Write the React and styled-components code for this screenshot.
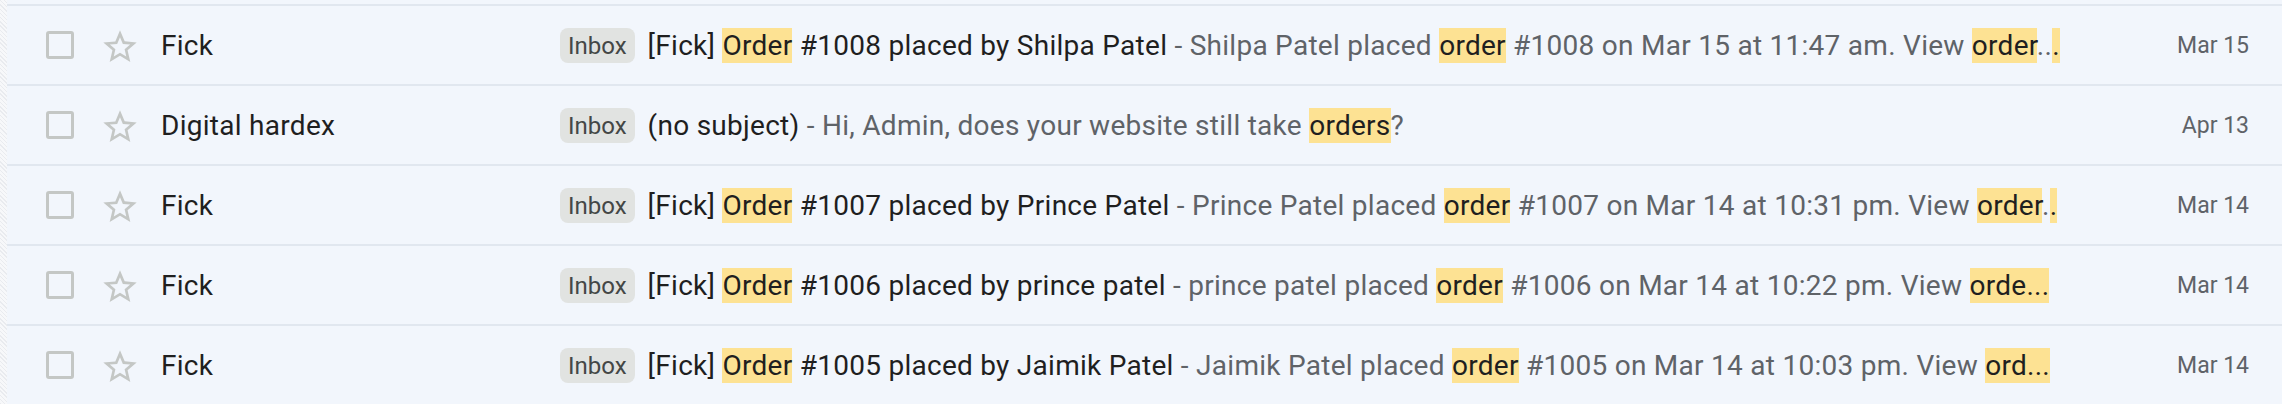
import React from "react";
import styled, { createGlobalStyle } from "styled-components";

const Global = createGlobalStyle`
  html, body { margin: 0; padding: 0; background: #ffffff; }
  body { font-family: Roboto, "Noto Sans", Arial, sans-serif; -webkit-font-smoothing: antialiased; }
`;

const Page = styled.div`
  display: flex;
  width: 2294px;
  height: 404px;
  overflow: hidden;
  background: #ffffff;
`;

const Gutter = styled.div`
  flex: 0 0 7px;
  background: repeating-linear-gradient(45deg, #e9ebef 0 1px, #f7f8fa 1px 3px);
`;

const List = styled.div`
  flex: 0 0 2275px;
  width: 2275px;
  min-width: 0;
  overflow: hidden;
  background: #f2f6fc;
  padding-top: 4px;
  box-sizing: border-box;
`;

const Row = styled.div`
  display: flex;
  align-items: center;
  width: 100%;
  height: 80px;
  box-sizing: border-box;
  border-top: 2px solid #e1e7ef;
  padding: 0 33px 0 39px;
  font-size: 28px;
  color: #1f1f1f;
  white-space: nowrap;
`;

const Check = styled.span`
  flex: 0 0 28px;
  height: 28px;
  box-sizing: border-box;
  border: 3px solid #c4c7c5;
  border-radius: 3px;
`;

const StarWrap = styled.span`
  flex: 0 0 40px;
  height: 40px;
  margin-left: 26px;
  margin-top: 3px;
  display: flex;
`;

const Sender = styled.span`
  flex: 0 0 399px;
  margin-left: 21px;
  color: #1f1f1f;
  letter-spacing: 0.28px;
  overflow: hidden;
`;

const Main = styled.div`
  flex: 1 1 0;
  min-width: 0;
  display: flex;
  align-items: center;
`;

const Label = styled.span`
  flex: 0 0 auto;
  display: inline-flex;
  align-items: center;
  height: 35px;
  padding: 0 8px;
  margin: 1px 13px 0 0;
  border-radius: 8px;
  background: #e1e3e1;
  color: #444746;
  font-size: 24px;
`;

const Text = styled.span`
  flex: 1 1 0;
  min-width: 0;
  letter-spacing: 0.27px;
`;

const Subject = styled.span`
  color: #1f1f1f;
`;

const Snippet = styled.span`
  color: #5f6368;
`;

const Hl = styled.span`
  background: #fde293;
  color: #1f1f1f;
  padding: 1px 0;
`;

const DateCell = styled.span`
  flex: 0 0 185px;
  text-align: right;
  font-size: 23px;
  color: #5f6368;
`;

const Star = () => (
  <svg width="40" height="40" viewBox="0 0 24 24" fill="#c4c7c5">
    <path d="M22 9.24l-7.19-.62L12 2 9.19 8.63 2 9.24l5.46 4.73L5.82 21 12 17.27 18.18 21l-1.63-7.03L22 9.24zM12 15.4l-3.76 2.27 1-4.28-3.32-2.88 4.38-.38L12 6.1l1.71 4.04 4.38.38-3.32 2.88 1 4.28L12 15.4z" />
  </svg>
);

const rows = [
  {
    sender: "Fick",
    subject: [["[Fick] "], ["Order", true], [" #1008 placed by Shilpa Patel"]],
    snippet: [
      [" - Shilpa Patel placed "],
      ["order", true],
      [" #1008 on Mar 15 at 11:47 am. View "],
      ["order", true],
      [".."],
      [".", true],
    ],
    date: "Mar 15",
  },
  {
    sender: "Digital hardex",
    subject: [["(no subject)"]],
    snippet: [[" - Hi, Admin, does your website still take "], ["orders", true], ["?"]],
    date: "Apr 13",
  },
  {
    sender: "Fick",
    subject: [["[Fick] "], ["Order", true], [" #1007 placed by Prince Patel"]],
    snippet: [
      [" - Prince Patel placed "],
      ["order", true],
      [" #1007 on Mar 14 at 10:31 pm. View "],
      ["order", true],
      ["."],
      [".", true],
    ],
    date: "Mar 14",
  },
  {
    sender: "Fick",
    subject: [["[Fick] "], ["Order", true], [" #1006 placed by prince patel"]],
    snippet: [
      [" - prince patel placed "],
      ["order", true],
      [" #1006 on Mar 14 at 10:22 pm. View "],
      ["orde...", true],
    ],
    date: "Mar 14",
  },
  {
    sender: "Fick",
    subject: [["[Fick] "], ["Order", true], [" #1005 placed by Jaimik Patel"]],
    snippet: [
      [" - Jaimik Patel placed "],
      ["order", true],
      [" #1005 on Mar 14 at 10:03 pm. View "],
      ["ord...", true],
    ],
    date: "Mar 14",
  },
];

const renderParts = (parts) =>
  parts.map(([t, hl], i) => (hl ? <Hl key={i}>{t}</Hl> : <React.Fragment key={i}>{t}</React.Fragment>));

export default function App() {
  return (
    <>
      <Global />
      <Page>
        <Gutter />
        <List>
          {rows.map((r, i) => (
            <Row key={i}>
              <Check />
              <StarWrap>
                <Star />
              </StarWrap>
              <Sender>{r.sender}</Sender>
              <Main>
                <Label>Inbox</Label>
                <Text>
                  <Subject>{renderParts(r.subject)}</Subject>
                  <Snippet>{renderParts(r.snippet)}</Snippet>
                </Text>
              </Main>
              <DateCell>{r.date}</DateCell>
            </Row>
          ))}
        </List>
      </Page>
    </>
  );
}
